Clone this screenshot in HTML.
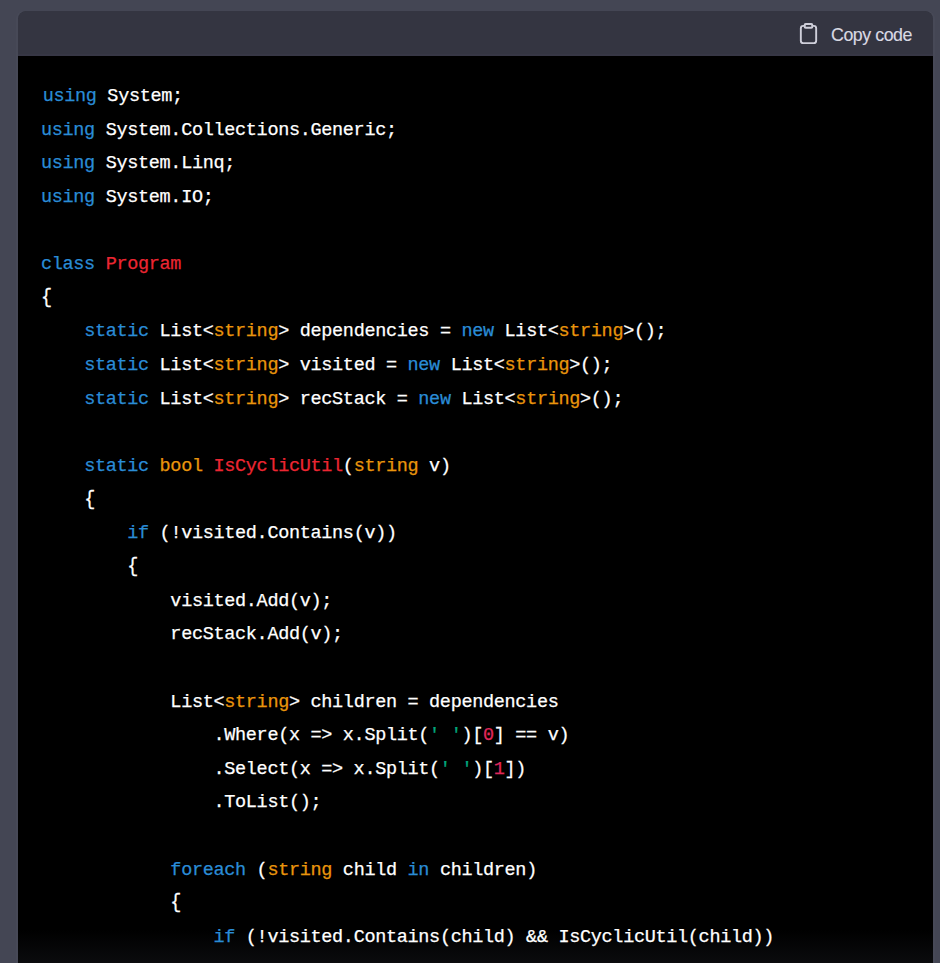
<!DOCTYPE html>
<html><head><meta charset="utf-8">
<style>
html,body{margin:0;padding:0;}
body{width:940px;height:963px;overflow:hidden;background:#444654;position:relative;}
.blk{position:absolute;left:18px;top:11px;width:915px;height:960px;border-radius:8px 8px 0 0;overflow:hidden;background:linear-gradient(#343541 0,#343541 45px,#000 45px);}
.hdr{position:absolute;left:0;top:0;width:915px;height:45px;background:#343541;border-radius:8px 8px 0 0;box-shadow:inset 0 -2px 0 rgba(60,61,75,.4);}
.cp{position:absolute;left:778.8px;top:11.2px;width:23px;height:23px;}
.ct{position:absolute;left:813px;top:13.5px;font-family:"Liberation Sans",sans-serif;font-size:17.8px;letter-spacing:-0.45px;-webkit-text-stroke:0.15px currentColor;line-height:20px;color:#d9d9e3;white-space:nowrap;}
pre{position:absolute;left:23px;top:69px;margin:0;font-family:"Liberation Mono",monospace;font-size:18.5px;letter-spacing:-0.322px;-webkit-text-stroke:0.25px currentColor;line-height:33.64px;color:#fff;white-space:pre;}
.l1{position:relative;left:1.7px}
.grad{position:absolute;left:0;top:919px;width:915px;height:44px;background:linear-gradient(to bottom,rgba(14,15,18,0) 0%,rgba(14,15,18,1) 100%);}
.ring{position:absolute;left:18px;top:11px;width:915px;height:960px;border-radius:8px 8px 0 0;box-shadow:-2px 0 0 0 rgba(78,80,95,.35), 2px 0 0 0 rgba(78,80,95,.35);pointer-events:none;}
.br{display:inline-block;transform:translateY(1px) scaleY(1.12);transform-origin:50% 80%}
.pa{display:inline-block;transform:scaleY(1.04);transform-origin:50% 76%}
.k{color:#2a8cd6}.t{color:#ec2632}.b{color:#e9950c}.s{color:#00a67d}.n{color:#e0285a}
</style></head><body>
<div class="blk">
<div class="hdr">
<svg class="cp" viewBox="0 0 24 24" fill="none" stroke="#cfcfda" stroke-width="2" stroke-linecap="round" stroke-linejoin="round"><path d="M16 4h1.5a2.5 2.5 0 0 1 2.5 2.5v13a2.5 2.5 0 0 1-2.5 2.5H6.5a2.5 2.5 0 0 1-2.5-2.5V6.5a2.5 2.5 0 0 1 2.5-2.5h1.5"/><rect x="8" y="2" width="8" height="4" rx="1" ry="1"/></svg>
<div class="ct">Copy code</div>
</div>
<div class="grad"></div>
<pre><span class="l1"><span class="k">using</span> System;</span>
<span class="k">using</span> System.Collections.Generic;
<span class="k">using</span> System.Linq;
<span class="k">using</span> System.IO;

<span class="k">class</span> <span class="t">Program</span>
<span class="br">{</span>
    <span class="k">static</span> List&lt;<span class="b">string</span>&gt; dependencies = <span class="k">new</span> List&lt;<span class="b">string</span>&gt;<span class="pa">(</span><span class="pa">)</span>;
    <span class="k">static</span> List&lt;<span class="b">string</span>&gt; visited = <span class="k">new</span> List&lt;<span class="b">string</span>&gt;<span class="pa">(</span><span class="pa">)</span>;
    <span class="k">static</span> List&lt;<span class="b">string</span>&gt; recStack = <span class="k">new</span> List&lt;<span class="b">string</span>&gt;<span class="pa">(</span><span class="pa">)</span>;

    <span class="k">static</span> <span class="b">bool</span> <span class="t">IsCyclicUtil</span><span class="pa">(</span><span class="b">string</span> v<span class="pa">)</span>
    <span class="br">{</span>
        <span class="k">if</span> <span class="pa">(</span>!visited.Contains<span class="pa">(</span>v<span class="pa">)</span><span class="pa">)</span>
        <span class="br">{</span>
            visited.Add<span class="pa">(</span>v<span class="pa">)</span>;
            recStack.Add<span class="pa">(</span>v<span class="pa">)</span>;

            List&lt;<span class="b">string</span>&gt; children = dependencies
                .Where<span class="pa">(</span>x =&gt; x.Split<span class="pa">(</span><span class="s">' '</span><span class="pa">)</span><span class="pa">[</span><span class="n">0</span><span class="pa">]</span> == v<span class="pa">)</span>
                .Select<span class="pa">(</span>x =&gt; x.Split<span class="pa">(</span><span class="s">' '</span><span class="pa">)</span><span class="pa">[</span><span class="n">1</span><span class="pa">]</span><span class="pa">)</span>
                .ToList<span class="pa">(</span><span class="pa">)</span>;

            <span class="k">foreach</span> <span class="pa">(</span><span class="b">string</span> child <span class="k">in</span> children<span class="pa">)</span>
            <span class="br">{</span>
                <span class="k">if</span> <span class="pa">(</span>!visited.Contains<span class="pa">(</span>child<span class="pa">)</span> &amp;&amp; IsCyclicUtil<span class="pa">(</span>child<span class="pa">)</span><span class="pa">)</span>
</pre>
</div>
<div class="ring"></div>
</body></html>
